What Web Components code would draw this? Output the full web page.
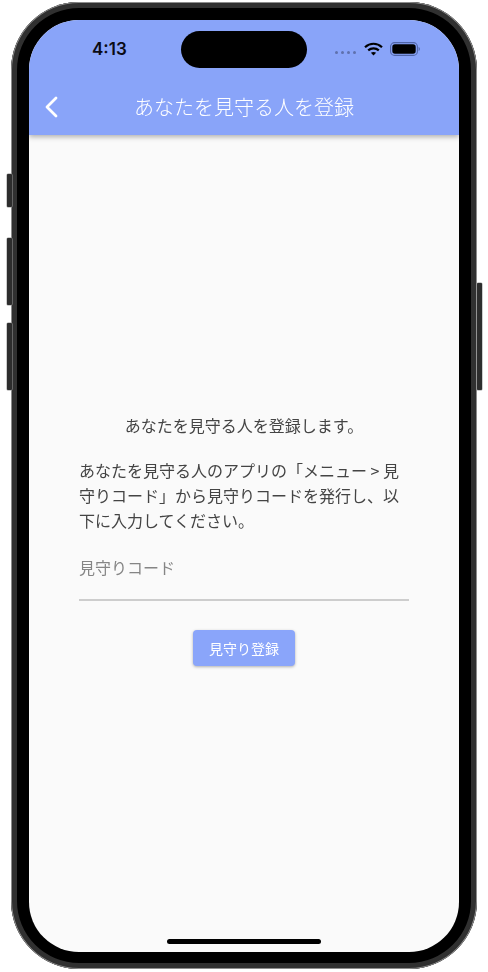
<!DOCTYPE html>
<html lang="ja">
<head>
<meta charset="utf-8">
<title>あなたを見守る人を登録</title>
<style>
  html, body { margin: 0; padding: 0; background: #fff; }
  body { font-family: "Noto Sans CJK JP", "Noto Sans", sans-serif; }
</style>
</head>
<body>
<phone-frame>
  <status-bar time="4:13"></status-bar>
  <app-bar title="あなたを見守る人を登録"></app-bar>
  <watch-form>
    <p slot="lead">あなたを見守る人を登録します。</p>
    <p slot="help">あなたを見守る人のアプリの「メニュー &gt; 見守りコード」から見守りコードを発行し、以下に入力してください。</p>
    <code-field label="見守りコード"></code-field>
    <raised-button>見守り登録</raised-button>
  </watch-form>
</phone-frame>

<script>
class PhoneFrame extends HTMLElement {
  constructor() {
    super();
    this.attachShadow({ mode: 'open' });
    this.shadowRoot.innerHTML = `
      <style>
        :host { display: block; width: 488px; height: 972px; padding: 2px 0 0 11px; box-sizing: border-box; }
        .body {
          position: relative;
          width: 466px; height: 967px;
          box-sizing: border-box;
          padding: 18px;
          background: #000;
          border-radius: 68px;
          box-shadow: inset 0 0 0 1px #8d8d8d, inset 0 0 0 6px #303030;
        }
        .screen {
          position: relative;
          width: 430px; height: 932px;
          border-radius: 50px;
          overflow: hidden;
          background: #fafafa;
          display: flex;
          flex-direction: column;
        }
        .island {
          position: absolute; left: 152px; top: 11px;
          width: 126px; height: 37px;
          border-radius: 19px;
          background: #000;
          z-index: 3;
        }
        .home {
          position: absolute; left: 138px; bottom: 8px;
          width: 154px; height: 5px;
          border-radius: 3px;
          background: #000;
        }
        .key {
          position: absolute;
          width: 5px;
          background: #2d2d2d;
          box-shadow: 0 0 0 .5px #999;
          border-radius: 1px;
        }
      </style>
      <div class="body">
        <div class="key" style="left:-4.5px;top:172px;height:33px"></div>
        <div class="key" style="left:-4.5px;top:236px;height:67px"></div>
        <div class="key" style="left:-4.5px;top:321px;height:67px"></div>
        <div class="key" style="right:-4.5px;top:281px;height:107px"></div>
        <div class="screen">
          <div class="island"></div>
          <slot></slot>
          <div class="home"></div>
        </div>
      </div>`;
  }
}

class StatusBar extends HTMLElement {
  constructor() {
    super();
    this.attachShadow({ mode: 'open' });
  }
  connectedCallback() {
    this.shadowRoot.innerHTML = `
      <style>
        :host {
          display: flex; align-items: center; justify-content: space-between;
          position: relative; z-index: 2;
          height: 59px; box-sizing: border-box;
          padding: 0 39px 0 63px;
          background: #89a4f9;
          color: #0b0b14;
          flex: none;
        }
        .time { font: 600 17px/18px Inter, "Liberation Sans", sans-serif; margin-top: -2px; }
        .icons { display: flex; align-items: center; gap: 7px; margin-top: -2px; }
        .dots { display: flex; gap: 2.5px; margin-top: 8px; margin-right: 1px; }
        .dots i { width: 3.5px; height: 3.5px; border-radius: 50%; background: #5f71ad; }
        svg { display: block; }
      </style>
      <span class="time">${this.getAttribute('time')}</span>
      <div class="icons">
        <div class="dots"><i></i><i></i><i></i><i></i></div>
        <svg width="19" height="14" viewBox="0 0 19 14" fill="none" stroke="#000" stroke-width="2.2">
          <path d="M1 5.2C6 .6 13 .6 18 5.2"/>
          <path d="M4.2 8.4c3-2.7 7.6-2.7 10.6 0"/>
          <path d="M9.5 13.6 6.9 10.8c1.5-1.2 3.7-1.2 5.2 0z" fill="#000" stroke="none"/>
        </svg>
        <svg width="30" height="14" viewBox="0 0 30 14">
          <rect x=".6" y=".6" width="26.8" height="12.8" rx="4" fill="none" stroke="#5065a8" stroke-width="1.1"/>
          <rect x="2.3" y="2.3" width="23.4" height="9.4" rx="2.6" fill="#000"/>
          <path d="M28.6 5v4c.8-.3 1.2-1.1 1.2-2s-.4-1.7-1.2-2z" fill="#5065a8"/>
        </svg>
      </div>`;
  }
}

class AppBar extends HTMLElement {
  constructor() {
    super();
    this.attachShadow({ mode: 'open' });
  }
  connectedCallback() {
    this.shadowRoot.innerHTML = `
      <style>
        :host {
          display: flex; align-items: center; justify-content: center;
          position: relative; z-index: 1;
          height: 56px; flex: none;
          background: #89a4f9;
          color: #fff;
          box-shadow: 0 2px 5px rgba(0,0,0,.3);
          font: 300 20px/28px "Noto Sans CJK JP", sans-serif;
        }
        svg { position: absolute; left: 15px; top: 17px; }
      </style>
      <svg width="14" height="22" viewBox="0 0 14 22" fill="none" stroke="#fff" stroke-width="2.8" stroke-linecap="round" stroke-linejoin="round">
        <path d="M12 2 3 11l9 9"/>
      </svg>
      <span>${this.getAttribute('title')}</span>`;
  }
}

class WatchForm extends HTMLElement {
  constructor() {
    super();
    this.attachShadow({ mode: 'open' });
    this.shadowRoot.innerHTML = `
      <style>
        :host {
          display: flex; flex-direction: column; justify-content: center;
          flex: 1;
          padding: 0 50px 8px;
          color: #444;
          font: 400 16px/24.6px "Noto Sans CJK JP", sans-serif;
          will-change: opacity; /* grey text edges, like the reference */
        }
        ::slotted(p) { margin: 0; }
        ::slotted([slot="lead"]) { text-align: center; margin-bottom: 21px; }
        ::slotted([slot="help"]) { margin-bottom: 21px; }
      </style>
      <slot name="lead"></slot>
      <slot name="help"></slot>
      <slot></slot>`;
  }
}

class CodeField extends HTMLElement {
  constructor() {
    super();
    this.attachShadow({ mode: 'open' });
  }
  connectedCallback() {
    this.shadowRoot.innerHTML = `
      <style>
        :host {
          display: block;
          height: 48px;
          box-sizing: border-box;
          border-bottom: 2px solid #cdcdcd;
          color: #858585;
          font: 400 16px/28px "Noto Sans CJK JP", sans-serif;
          margin-bottom: 29px;
        }
      </style>
      <span>${this.getAttribute('label')}</span>`;
  }
}

class RaisedButton extends HTMLElement {
  constructor() {
    super();
    this.attachShadow({ mode: 'open' });
    this.shadowRoot.innerHTML = `
      <style>
        :host {
          display: flex; align-items: center; justify-content: center;
          align-self: center;
          width: 102px; height: 36px;
          box-sizing: border-box;
          padding-bottom: 1px;
          border-radius: 4px;
          background: #8aa5fa;
          color: #fff;
          font: 400 14px/20px "Noto Sans CJK JP", sans-serif;
          box-shadow: 0 1px 3px rgba(0,0,0,.3);
        }
      </style>
      <slot></slot>`;
  }
}

customElements.define('phone-frame', PhoneFrame);
customElements.define('status-bar', StatusBar);
customElements.define('app-bar', AppBar);
customElements.define('watch-form', WatchForm);
customElements.define('code-field', CodeField);
customElements.define('raised-button', RaisedButton);
</script>
</body>
</html>
